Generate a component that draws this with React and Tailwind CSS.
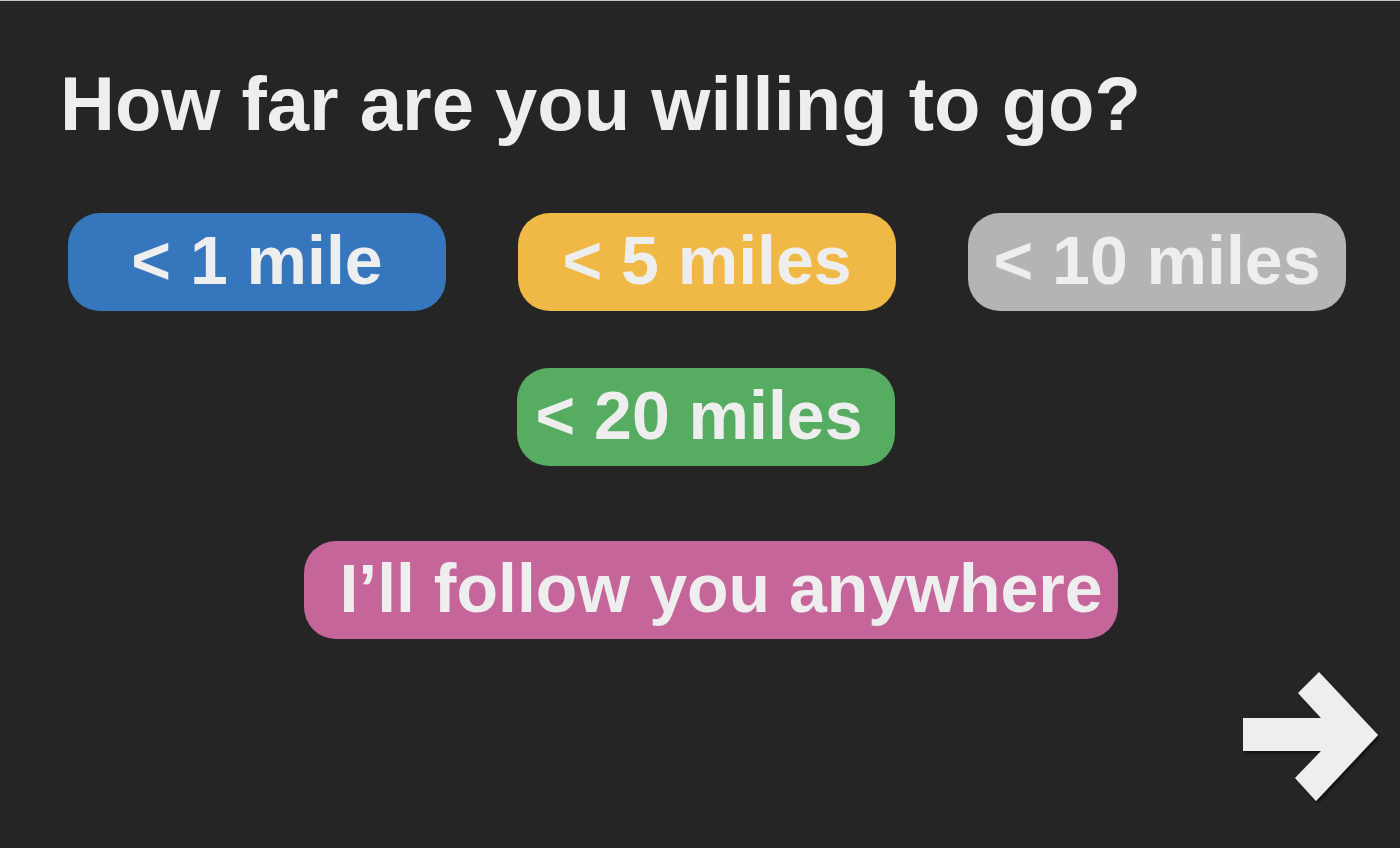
import React from 'react'

const choices = [
  { label: '< 1 mile', bg: 'bg-[#3676bc]' },
  { label: '< 5 miles', bg: 'bg-[#f0b946]' },
  { label: '< 10 miles', bg: 'bg-[#b4b4b4]' },
]

function Choice({ label, className }) {
  return (
    <button
      className={`h-[98px] rounded-[32px] flex items-center justify-center pb-1 text-[68px] font-bold leading-none text-[#eeeeee] ${className}`}
    >
      {label}
    </button>
  )
}

function NextArrow() {
  return (
    <svg width="150" height="145" viewBox="0 0 150 145">
      <defs>
        <filter id="shadow" x="-10%" y="-10%" width="130%" height="130%">
          <feDropShadow dx="2" dy="2" stdDeviation="1.5" floodColor="#000" floodOpacity="0.6" />
        </filter>
      </defs>
      <polygon
        points="7,53 85,53 62,28 83,7 142,70 80,136 59,113 85,86 7,86"
        fill="#eeeeee"
        filter="url(#shadow)"
      />
    </svg>
  )
}

export default function App() {
  return (
    <div className="h-[848px] w-full overflow-hidden bg-[#252525] border-t border-[#c4c4c4] flex flex-col font-['Liberation_Sans',Arial,sans-serif] text-[#eeeeee]">
      <h1 className="mt-[65px] ml-[60px] text-[76px] font-bold leading-none">
        How far are you willing to go?
      </h1>

      <div className="mt-[71px] pl-[68px] flex gap-[72px]">
        {choices.map(c => (
          <Choice key={c.label} label={c.label} className={`w-[378px] ${c.bg}`} />
        ))}
      </div>

      <div className="mt-[57px] pl-[12px] flex justify-center">
        <Choice label="< 20 miles" className="w-[378px] pr-[14px] bg-[#56ac61]" />
      </div>

      <div className="mt-[75px] pl-[22px] flex justify-center">
        <Choice label="I’ll follow you anywhere" className="w-[814px] pl-[20px] bg-[#c5659a]" />
      </div>

      <div className="mt-[26px] pr-[14px] flex justify-end">
        <NextArrow />
      </div>
    </div>
  )
}
